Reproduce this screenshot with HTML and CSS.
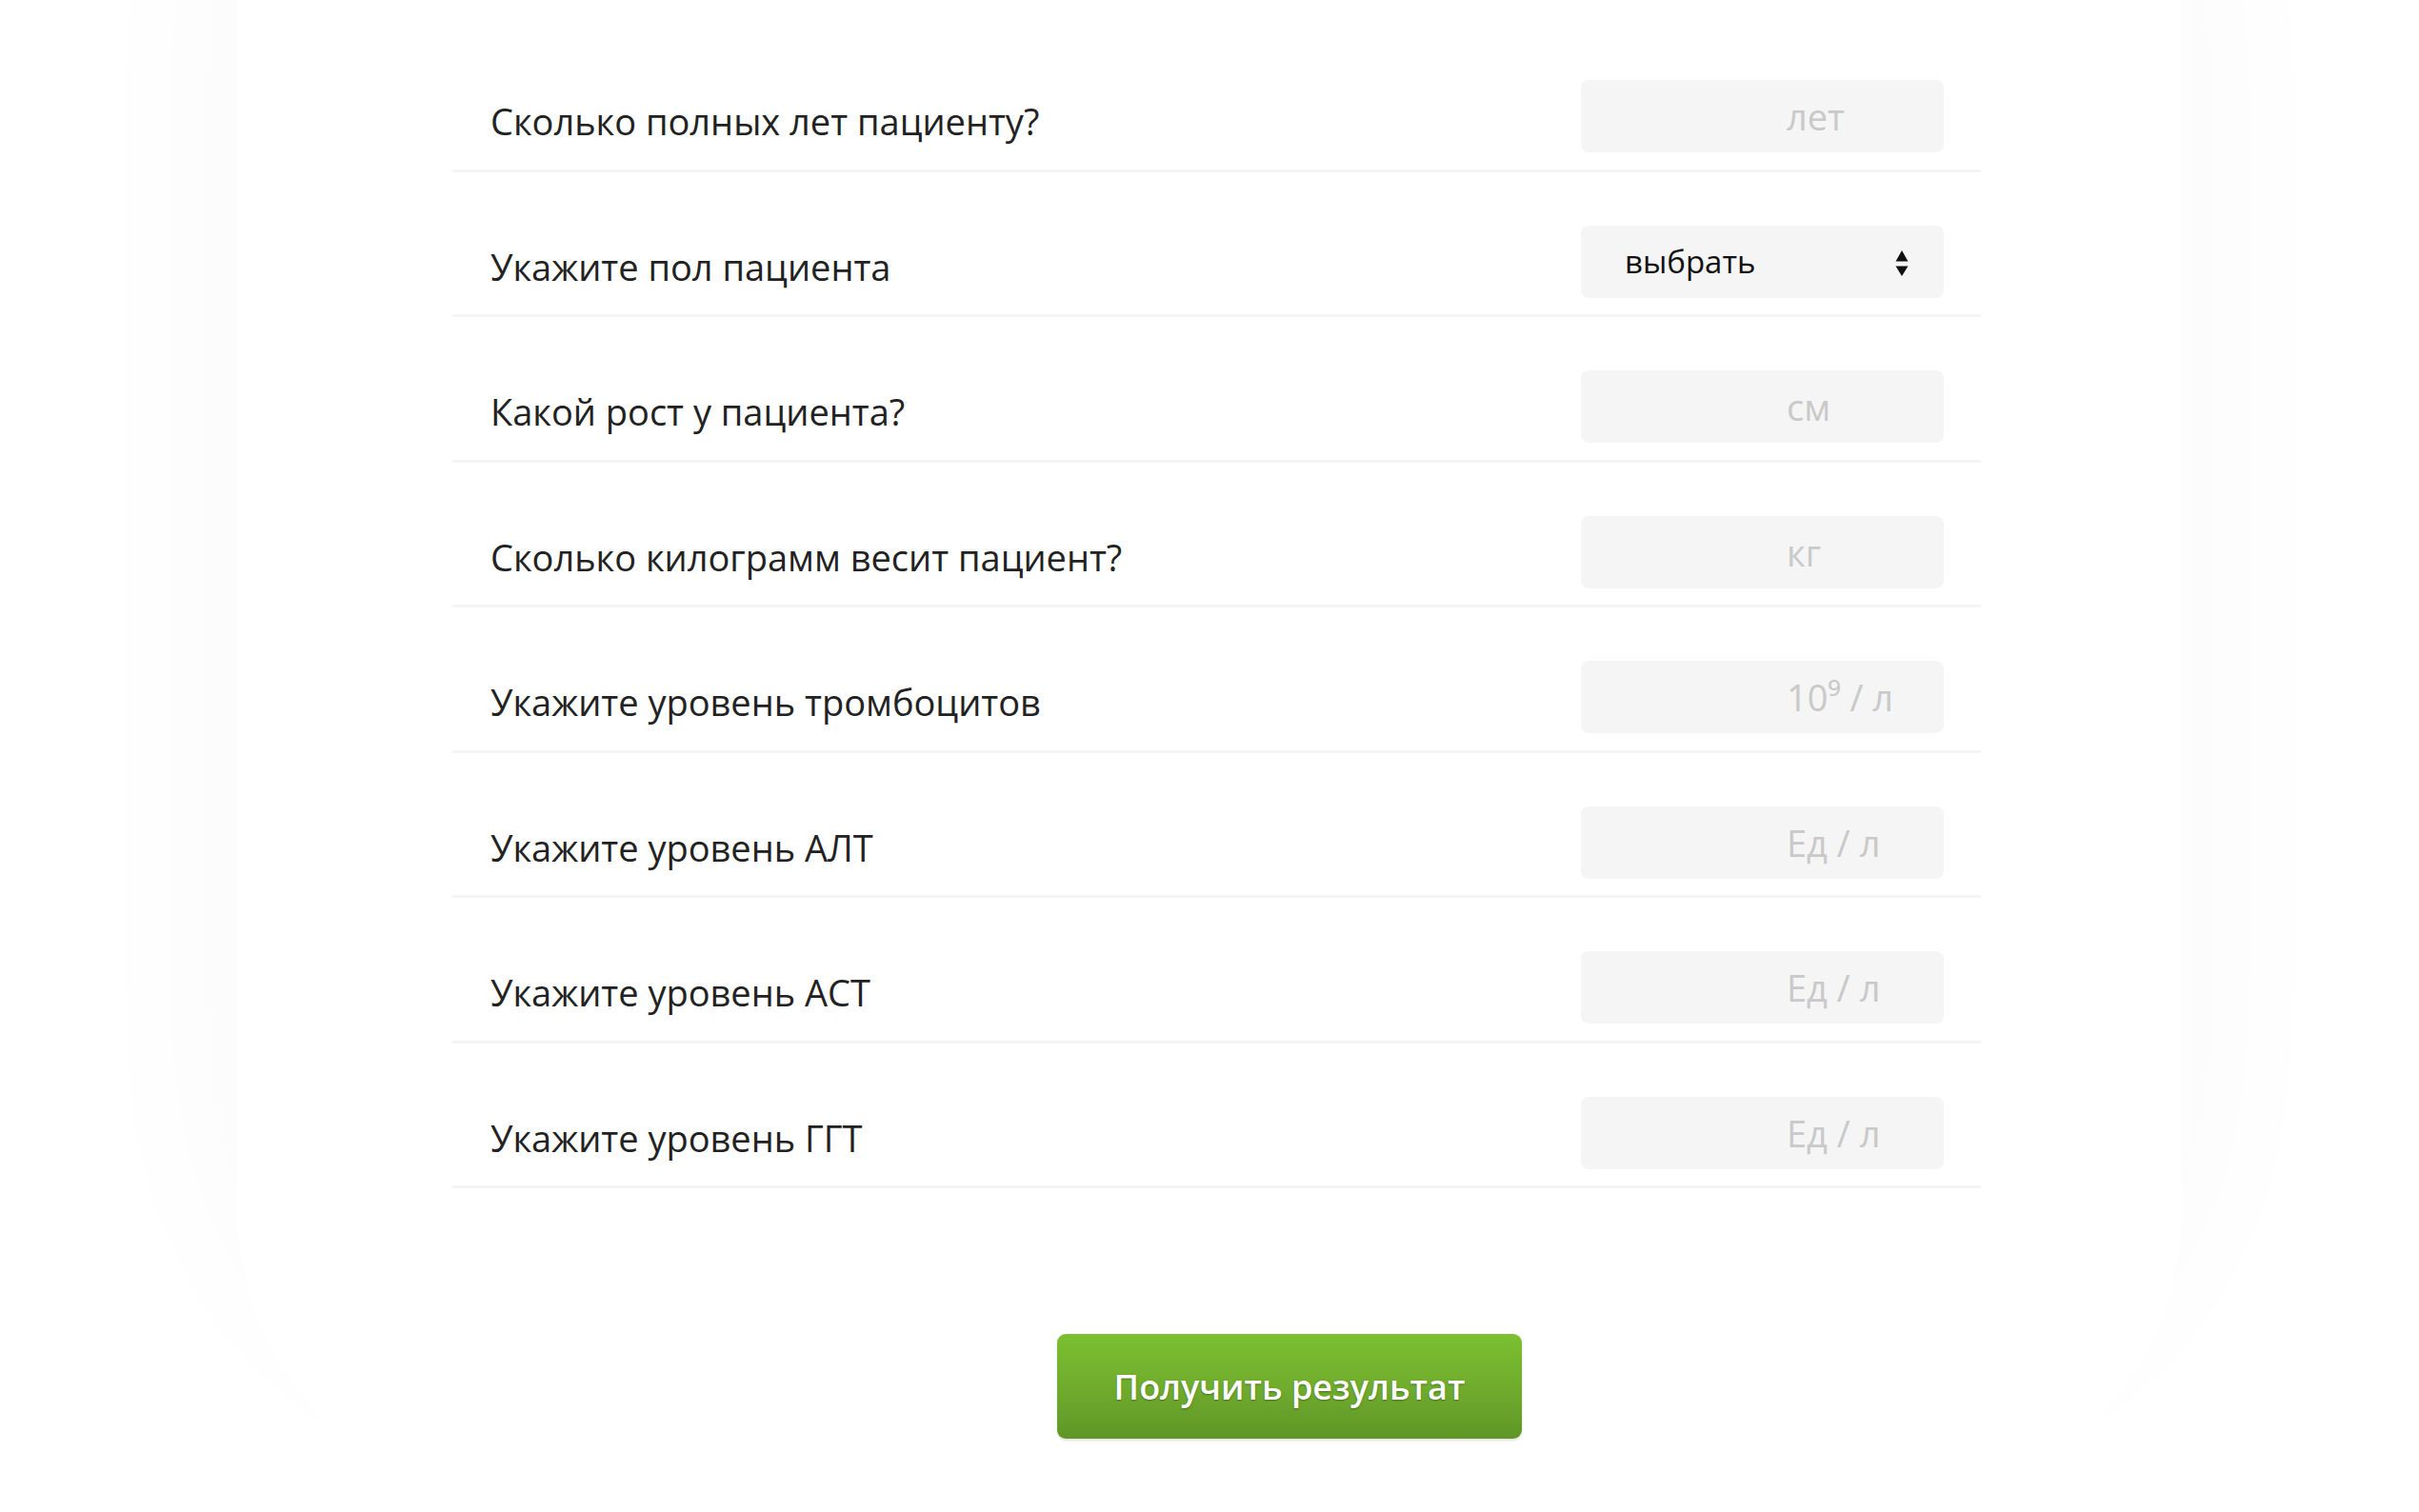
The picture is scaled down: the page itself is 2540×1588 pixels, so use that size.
FILE: index.html
```html
<!DOCTYPE html>
<html lang="ru">
<head>
<meta charset="utf-8">
<title>Калькулятор</title>
<link rel="stylesheet" href="styles.css">
</head>
<body>
<div class="card">
  <form class="form">
    <div class="row">
      <label class="label">Сколько полных лет пациенту?</label>
      <input class="field" type="text" placeholder="лет">
    </div>
    <div class="row">
      <label class="label">Укажите пол пациента</label>
      <div class="select-wrap">
        <select class="field select">
          <option>выбрать</option>
          <option>мужской</option>
          <option>женский</option>
        </select>
        <svg class="arrows" width="16" height="32" viewBox="0 0 16 32">
          <path d="M8 2 L14.5 13.5 L1.5 13.5 Z" fill="#111"/>
          <path d="M1.5 18.5 L14.5 18.5 L8 29 Z" fill="#111"/>
        </svg>
      </div>
    </div>
    <div class="row">
      <label class="label">Какой рост у пациента?</label>
      <input class="field" type="text" placeholder="см">
    </div>
    <div class="row">
      <label class="label">Сколько килограмм весит пациент?</label>
      <input class="field" type="text" placeholder="кг">
    </div>
    <div class="row">
      <label class="label">Укажите уровень тромбоцитов</label>
      <input class="field" type="text" placeholder="10⁹ / л">
    </div>
    <div class="row">
      <label class="label">Укажите уровень АЛТ</label>
      <input class="field" type="text" placeholder="Ед / л">
    </div>
    <div class="row">
      <label class="label">Укажите уровень АСТ</label>
      <input class="field" type="text" placeholder="Ед / л">
    </div>
    <div class="row">
      <label class="label">Укажите уровень ГГТ</label>
      <input class="field" type="text" placeholder="Ед / л">
    </div>
    <div class="actions">
      <button class="btn" type="button">Получить результат</button>
    </div>
  </form>
</div>
</body>
</html>
```
FILE: styles.css
```css
html, body {
  margin: 0;
  padding: 0;
  background: #ffffff;
}

body {
  font-family: "Open Sans", "Noto Sans", "DejaVu Sans", sans-serif;
  color: #222222;
  height: 1588px;
  overflow: hidden;
}

.card {
  margin: 0 249px;
  background: #ffffff;
  border-radius: 0 0 320px 320px;
  box-shadow: 0 -130px 210px rgba(0, 0, 0, 0.03);
  padding: 28px 211px 0 226px;
  height: 1588px;
  box-sizing: border-box;
}

.form {
  display: flex;
  flex-direction: column;
}

.row {
  display: flex;
  align-items: center;
  justify-content: space-between;
  padding: 56px 39px 17.5px 40px;
  border-bottom: 3px solid #f4f4f4;
}

.label {
  font-size: 38px;
  color: #222222;
  padding-top: 12px;
  line-height: 1.36;
}

.field {
  width: 381px;
  height: 76px;
  box-sizing: border-box;
  border: none;
  outline: none;
  border-radius: 8px;
  background: #f5f5f5;
  font-family: "Open Sans", "Noto Sans", "DejaVu Sans", sans-serif;
  font-size: 38px;
  color: #222222;
  padding: 0 20px 0 216px;
}

.field::placeholder {
  color: #c9c9c9;
  opacity: 1;
}

.select-wrap {
  position: relative;
  width: 381px;
  height: 76px;
}

.select {
  appearance: none;
  -webkit-appearance: none;
  font-size: 33px;
  color: #111111;
  padding: 0 60px 0 46px;
}

.arrows {
  position: absolute;
  right: 36px;
  top: 24px;
  pointer-events: none;
}

.actions {
  display: flex;
  padding-left: 635px;
  margin-top: 153px;
}

.btn {
  width: 488px;
  height: 110px;
  border: none;
  border-radius: 9px;
  background: linear-gradient(to bottom, #7cc031 0%, #6faa2d 55%, #5f9626 100%);
  box-shadow: 0 2px 3px rgba(0, 0, 0, 0.12);
  color: #ffffff;
  font-family: "Open Sans", "Noto Sans", "DejaVu Sans", sans-serif;
  font-weight: 600;
  font-size: 36px;
  text-shadow: 0 1px 2px rgba(0, 0, 0, 0.35);
  cursor: pointer;
}
```
